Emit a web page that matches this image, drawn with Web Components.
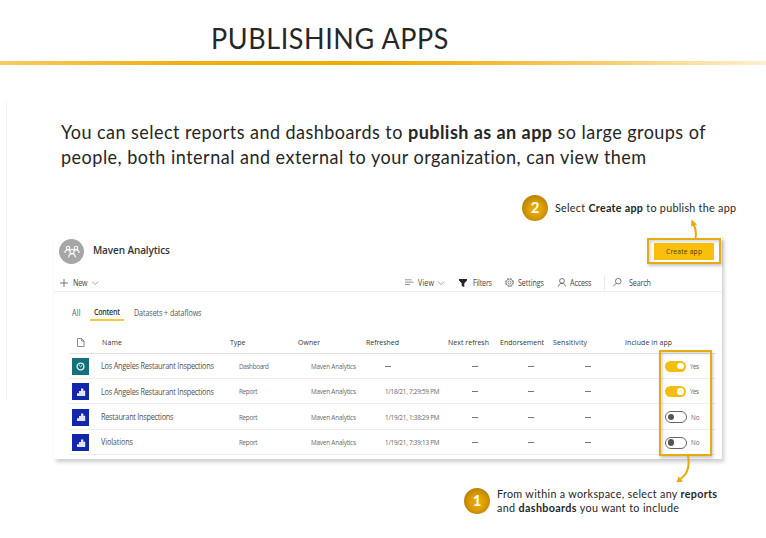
<!DOCTYPE html>
<html lang="en">
<head>
<meta charset="utf-8">
<title>Publishing Apps</title>
<style>
html,body{margin:0;background:#fff;overflow:hidden}
body{width:766px;height:538px;font-family:Lato,"Liberation Sans",sans-serif;color:#262626}
</style>
</head>
<body>
<publish-slide></publish-slide>
<script>
const define = (name, markup, init) => {
  const tpl = document.createElement('template');
  tpl.innerHTML = markup;
  customElements.define(name, class extends HTMLElement {
    constructor() {
      super();
      this.attachShadow({mode: 'open'}).append(tpl.content.cloneNode(true));
    }
    connectedCallback() { if (init) init(this, this.shadowRoot); }
  });
};

/* One line of text, condensed by --condense and tracked so that it spans the width given in "w". */
define('text-line', `
<style>
:host{display:block;white-space:nowrap;line-height:1.2}
span{display:inline-block;transform-origin:0 50%}
::slotted(b){font-weight:700}
</style><span><slot></slot></span>`, (el, root) => {
  const w = +el.getAttribute('w');
  const condense = +getComputedStyle(el).getPropertyValue('--condense') || 0.93;
  const span = root.querySelector('span');
  el.style.width = w + 'px';
  const n = el.textContent.length;
  const track = (w / condense - span.getBoundingClientRect().width) / (n - 1);
  span.style.letterSpacing = track.toFixed(3) + 'px';
  span.style.transform = `scaleX(${condense})`;
});

define('number-badge', `
<style>
:host{display:flex;flex:none;width:26px;height:26px;border-radius:50%;align-items:center;justify-content:center;
font:700 15px/1 Lato,sans-serif;color:#fff;
background:radial-gradient(circle at 52% 55%,#efab00 0%,#e0a000 35%,#b98400 70%,#8a6200 100%)}
</style><slot></slot>`);

const ICONS = {
  people: '<g fill="none" stroke="#fff" stroke-width="1.1"><circle cx="4" cy="3" r="1.7"/><circle cx="12" cy="3" r="1.7"/><circle cx="8" cy="6.4" r="2.1"/><path d="M.8 8C1 6 2.200 4.900 3.800 4.800 4.800 4.800 5.400 5.200 6 5.600M15.200 8C15 6 13.800 4.900 12.200 4.800 11.200 4.800 10.600 5.200 10 5.600M4.600 12.500C4.800 10 6 8.600 8 8.600S11.200 10 11.400 12.500"/></g>',
  plus: '<path d="M4 0V8M0 4H8" fill="none" stroke="#555" stroke-width=".8"/>',
  chevron: '<path d="M.2.6 3.200 3.600 6.200 .6" fill="none" stroke="#888" stroke-width=".8"/>',
  view: '<path d="M0 .8H6.500M0 3.200H8.500M0 5.600H5" fill="none" stroke="#777" stroke-width=".8"/>',
  filter: '<path d="M0 0H8V1.500L5.300 4.200V8L2.700 7V4.200L0 1.500Z" fill="#252525"/>',
  gear: '<g fill="none" stroke="#666"><circle cx="4.500" cy="4.500" r="3.900" stroke-width="1" stroke-dasharray="1.900 1.160"/><circle cx="4.500" cy="4.500" r="3.300" stroke-width=".5"/><circle cx="4.500" cy="4.500" r="1.500" stroke-width=".7"/></g>',
  person: '<g fill="none" stroke="#555" stroke-width=".8"><circle cx="4" cy="2.900" r="2.400"/><path d="M.5 8.500C.7 6.500 2 5.300 4 5.300S7.300 6.500 7.500 8.500"/></g>',
  search: '<g fill="none" stroke="#555" stroke-width=".8"><circle cx="5.300" cy="3.200" r="2.800"/><path d="M3.300 5.200.3 8.200"/></g>',
  page: '<path d="M.5.500H4.500L7 3V8.500H.5ZM4.500.500V3H7" fill="none" stroke="#76706a" stroke-width=".8"/>',
  gauge: '<g fill="none" stroke="#e8f4f4"><circle cx="4.500" cy="4.500" r="3.400" stroke-width="1.300"/><path d="M4 5.200 6.300 3M3 3.600 4 3" stroke-width=".9"/></g>',
  bars: '<path d="M0 8V5.200H2V3H4V0.500H6.300V2.800H8.200V8Z" fill="#e6e8fb"/><path d="M2 8V5M4 8V3M6.300 8V3" stroke="#b9bff0" stroke-width=".3"/>'
};
define('glyph-icon', `<style>:host{display:block;flex:none}svg{display:block;overflow:visible}</style><svg></svg>`, (el, root) => {
  const [w, h] = el.getAttribute('box').split(' ');
  const s = root.querySelector('svg');
  s.setAttribute('width', w); s.setAttribute('height', h);
  s.innerHTML = ICONS[el.getAttribute('name')];
});

define('item-toggle', `
<style>
:host{display:flex;align-items:center;gap:4.500px;font-size:7.200px;color:#666}
i{box-sizing:border-box;display:flex;align-items:center;width:21px;height:11px;border-radius:6px;background:#f5bd0e;padding:0 2px;justify-content:flex-end}
i::after{content:"";width:6.500px;height:6.500px;border-radius:50%;background:#fff}
:host([off]) i{width:22px;height:12px;background:#fff;border:1px solid #666;justify-content:flex-start}
:host([off]) i::after{background:#555}
</style><i></i><slot></slot>`);

define('workspace-header', `
<style>
:host{display:block;height:56px;box-sizing:border-box;border-bottom:1px solid #eee}
.top{display:flex;height:32px;padding:0 8px 0 5px;align-items:center}
.avatar{display:flex;width:25px;height:25px;border-radius:50%;background:#a6a6a6;align-items:center;justify-content:center;margin-top:-1px}
.name{font-size:11.500px;font-weight:600;color:#333;margin-left:9px;margin-top:-3px}
.create{display:flex;align-items:center;justify-content:center;margin-left:auto;width:60px;height:17px;padding-top:1px;box-sizing:border-box;background:#f9bf0a;font-size:7.700px;color:#4a3d16;font-weight:500}
.bar{display:flex;height:24px;align-items:center;padding:2px 0 0 6px;box-sizing:border-box;margin-top:2px;font-size:8.200px;color:#444}
.bar>*{flex:none}
.sep{width:1px;height:14px;background:#e8e8e8}
</style>
<div class="top"><div class="avatar"><glyph-icon name="people" box="16 13"></glyph-icon></div>
<text-line class="name" w="77">Maven Analytics</text-line>
<div class="create"><text-line w="36">Create app</text-line></div></div>
<div class="bar">
<glyph-icon name="plus" box="8 8"></glyph-icon><text-line w="14.500" style="margin-left:5px">New</text-line><glyph-icon name="chevron" box="6 4" style="margin-left:4px"></glyph-icon>
<glyph-icon name="view" box="8 7" style="margin-left:307.500px"></glyph-icon><text-line w="16" style="margin-left:5px">View</text-line><glyph-icon name="chevron" box="6 4" style="margin-left:4px"></glyph-icon>
<glyph-icon name="filter" box="8 8" style="margin-left:14.500px"></glyph-icon><text-line w="19" style="margin-left:6.500px">Filters</text-line>
<glyph-icon name="gear" box="9 9" style="margin-left:13px"></glyph-icon><text-line w="26" style="margin-left:4px">Settings</text-line>
<glyph-icon name="person" box="8 9" style="margin-left:14px"></glyph-icon><text-line w="21.500" style="margin-left:4px">Access</text-line>
<div class="sep" style="margin-left:12px"></div>
<glyph-icon name="search" box="8 9" style="margin-left:8px"></glyph-icon><text-line w="22" style="margin-left:8.500px">Search</text-line>
</div>`);

define('tab-strip', `
<style>
:host{display:flex;height:28px;box-sizing:border-box;padding-left:18px;font-size:8.200px;color:#555;align-items:flex-end}
text-line{padding-bottom:2px}
div{padding:0 3.500px 0 4.500px;margin:0 10.500px -1px 9px;border-bottom:2px solid #efca3a;color:#333;font-weight:600}
</style>
<text-line w="8.500">All</text-line><div><text-line w="26">Content</text-line></div><text-line w="67.500">Datasets + dataflows</text-line>`);

define('content-table', `
<style>
:host{display:block;padding:14px 6px 0 15px}
.row{display:grid;grid-template-columns:32px 129px 67.500px 68.500px 81.500px 52px 53px 72px 1fr;height:25.450px;box-sizing:border-box;padding-top:1px;border-bottom:1px solid #ededed;align-items:center;font-size:7.300px;color:#666}
.head{height:20px;font-size:8px;font-weight:500;color:#333;border-color:#e2e2e2;padding:0 0 2px}
.tile{display:flex;width:17px;height:17px;background:#1126a8;align-items:center;justify-content:center;margin-left:3px}
.tile.dash{background:#156f7c}
.name{font-size:8.400px;color:#505050}
.type{margin-left:9px}.own{margin-left:13.500px}.ref{margin-left:18.500px}
.d1{margin-left:24.500px}.d2{margin-left:28.500px}.d3{margin-left:32.500px}
hr{width:6px;height:0;border:0;border-top:1px solid #777;margin:0;}
item-toggle{margin-left:40px}
</style>
<div class="row head"><glyph-icon name="page" box="8 9" style="margin-left:8px"></glyph-icon><text-line w="20" style="margin-left:.5px">Name</text-line><text-line w="15.500">Type</text-line><text-line w="22">Owner</text-line><text-line w="33">Refreshed</text-line><text-line w="41">Next refresh</text-line><text-line w="44">Endorsement</text-line><text-line w="34">Sensitivity</text-line><text-line w="47">Include in app</text-line></div>
<section></section>`, (el, root) => {
  const rows = [
    ['dash', 'Los Angeles Restaurant Inspections', 113, 'Dashboard', 30, '', true],
    ['', 'Los Angeles Restaurant Inspections', 113, 'Report', 18.5, '1/18/21, 7:29:59 PM', true],
    ['', 'Restaurant Inspections', 72.5, 'Report', 18.5, '1/19/21, 1:38:29 PM', false],
    ['', 'Violations', 32, 'Report', 18.5, '1/19/21, 7:39:13 PM', false]
  ];
  root.querySelector('section').innerHTML = rows.map(([k, name, nw, type, tw, date, on]) =>
    `<div class="row"><div class="tile ${k}"><glyph-icon name="${k ? 'gauge' : 'bars'}" box="${k ? '9 9' : '8 8'}"></glyph-icon></div>
    <text-line class="name" w="${nw}">${name}</text-line><text-line class="type" w="${tw}">${type}</text-line><text-line class="own" w="45">Maven Analytics</text-line>
    ${date ? `<text-line class="ref" w="54.5">${date}</text-line>` : '<hr class="ref">'}
    <hr class="d1"><hr class="d2"><hr class="d3">
    <item-toggle ${on ? '' : 'off'}><text-line w="${on ? 9 : 8.5}">${on ? 'Yes' : 'No'}</text-line></item-toggle></div>`).join('');
});

define('workspace-card', `
<style>
:host{--condense:.87;display:block;width:668px;height:223px;margin-left:54px;background:#fff;box-shadow:2px 3px 4px rgba(0,0,0,.2);font-family:"Open Sans","Noto Sans",sans-serif}
</style><workspace-header></workspace-header><tab-strip></tab-strip><content-table></content-table>`);

define('step-note', `
<style>
:host{display:flex;align-items:center;gap:7px;font-size:11.600px;color:#262626}
div{padding-top:1px}
</style><slot name="badge"></slot><div><slot></slot></div>`);

define('highlight-frame', `
<style>:host{position:absolute;box-sizing:border-box;border:2px solid #e6aa12;box-shadow:1px 2px 3px rgba(0,0,0,.22),inset 2px 2px 3px rgba(0,0,0,.14)}</style>`);

define('publish-slide', `
<style>
:host{display:flex;flex-direction:column;position:relative;width:766px;height:538px;overflow:hidden;background:#fff}
.title{height:61px;box-sizing:border-box;padding:21px 0 0 211px;font-size:29px;color:#262626}
.rule{height:3.500px;background:linear-gradient(90deg,#f5cc5c 0,#f0b014 23%,#efab00 45%,#f2b21a 57%,#f7cc68 78%,#fff0cf 100%)}
.lead{padding:55.500px 0 0 61px;height:130px;box-sizing:border-box;font-size:19.400px;color:#262626}
.lead text-line{line-height:24.500px}
.first{padding-left:522px;height:26px;margin-bottom:15px;box-sizing:border-box}
.second{padding:27px 0 0 464px}
.edge{position:absolute;left:6px;top:102px;width:1px;height:298px;background:#f0f0f0}
svg{position:absolute;left:0;top:0;pointer-events:none}
.second text-line{line-height:14.500px}
</style>
<div class="title"><text-line w="237.500">PUBLISHING APPS</text-line></div>
<div class="rule"></div>
<div class="lead"><text-line w="644.500">You can select reports and dashboards to <b>publish as an app</b> so large groups of</text-line><text-line w="585.500">people, both internal and external to your organization, can view them</text-line></div>
<step-note class="first"><number-badge slot="badge">2</number-badge><text-line w="181">Select <b>Create app</b> to publish the app</text-line></step-note>
<workspace-card></workspace-card>
<step-note class="second"><number-badge slot="badge">1</number-badge><text-line w="220">From within a workspace, select any <b>reports</b></text-line><text-line w="182">and <b>dashboards</b> you want to include</text-line></step-note>
<div class="edge"></div>
<highlight-frame style="left:647px;top:238px;width:74px;height:26px"></highlight-frame>
<highlight-frame style="left:659px;top:350px;width:53px;height:106px"></highlight-frame>
<svg width="766" height="538" fill="none" stroke="#eaa90c" stroke-width="2"><path d="M695.500 238C696.500 233 695.500 228 693.500 223.500M688 456C690 467 688 474 680.500 479"/><path d="M691.500 219.500 697 224.500 691 226.500ZM676.500 482.500 678.500 476.500 683 481.500Z" fill="#eaa90c" stroke="none"/></svg>`);
</script>
</body>
</html>
